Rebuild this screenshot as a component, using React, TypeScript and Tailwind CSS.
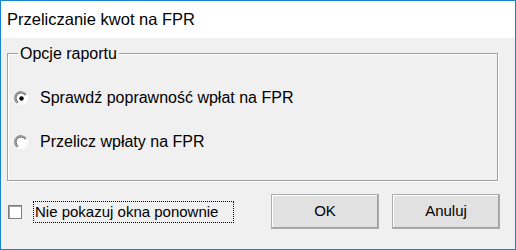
import React from "react";

function Radio({ checked }: { checked?: boolean }) {
  return (
    <svg width="15" height="15" viewBox="0 0 15 15" className="shrink-0">
      <circle cx="7.5" cy="7.5" r="6" fill="#ffffff" />
      <path d="M12.3 3.6 A6.3 6.3 0 1 0 3.6 12.3" fill="none" stroke="#8a8a8a" strokeWidth="1.2" />
      <path d="M11.2 4.3 A5 5 0 1 0 4.3 11.2" fill="none" stroke="#4a4a4a" strokeWidth="1" />
      <path d="M3.6 12.3 A6.3 6.3 0 0 0 12.3 3.6" fill="none" stroke="#ffffff" strokeWidth="1.2" />
      {checked && <circle cx="7.5" cy="7.5" r="2.2" fill="#000000" />}
    </svg>
  );
}

export default function App() {
  return (
    <div
      className="w-[516px] h-[250px] border border-[#1883d7] flex flex-col overflow-hidden"
      style={{ fontFamily: '"Liberation Sans", Arial, sans-serif' }}
    >
      <div className="h-[37px] bg-white flex items-center pl-[6px] text-[16.5px] text-black">
        Przeliczanie kwot na FPR
      </div>
      <div className="flex-1 bg-[#f0f0f0] px-[6px] pt-[7px] text-[15px] text-black flex flex-col">
        <fieldset className="w-[491px] h-[136px] border border-[#a0a0a0] shadow-[inset_1px_1px_0_#ffffff,1px_1px_0_#ffffff] pl-[6px] pr-0 pb-0 m-0">
          <legend className="ml-[4px] px-[2px] leading-[17px] text-[16px]">Opcje raportu</legend>
          <div className="flex items-center gap-[11px] mt-[24px] text-[16px]">
            <Radio checked />
            <span>Sprawdź poprawność wpłat na FPR</span>
          </div>
          <div className="flex items-center gap-[11px] mt-[20px] text-[16px]">
            <Radio />
            <span>Przelicz wpłaty na FPR</span>
          </div>
        </fieldset>
        <div className="flex items-center mt-[13px]">
          <div className="w-[14px] h-[14px] bg-white border border-[#808080] shadow-[inset_1px_1px_0_#a0a0a0] shrink-0 ml-[1px]" />
          <div className="ml-[11px] px-[1px] border border-dotted border-[#000] leading-[20px] w-[201px]">
            Nie pokazuj okna ponownie
          </div>
          <button className="ml-[37px] w-[108px] h-[35px] bg-[#e1e1e1] border border-[#adadad] shadow-[inset_-1px_-1px_0_#a0a0a0,inset_1px_1px_0_#ffffff] text-[15px]">
            OK
          </button>
          <button className="ml-[13px] w-[108px] h-[35px] bg-[#e1e1e1] border border-[#adadad] shadow-[inset_-1px_-1px_0_#a0a0a0,inset_1px_1px_0_#ffffff] text-[15px]">
            Anuluj
          </button>
        </div>
      </div>
    </div>
  );
}
